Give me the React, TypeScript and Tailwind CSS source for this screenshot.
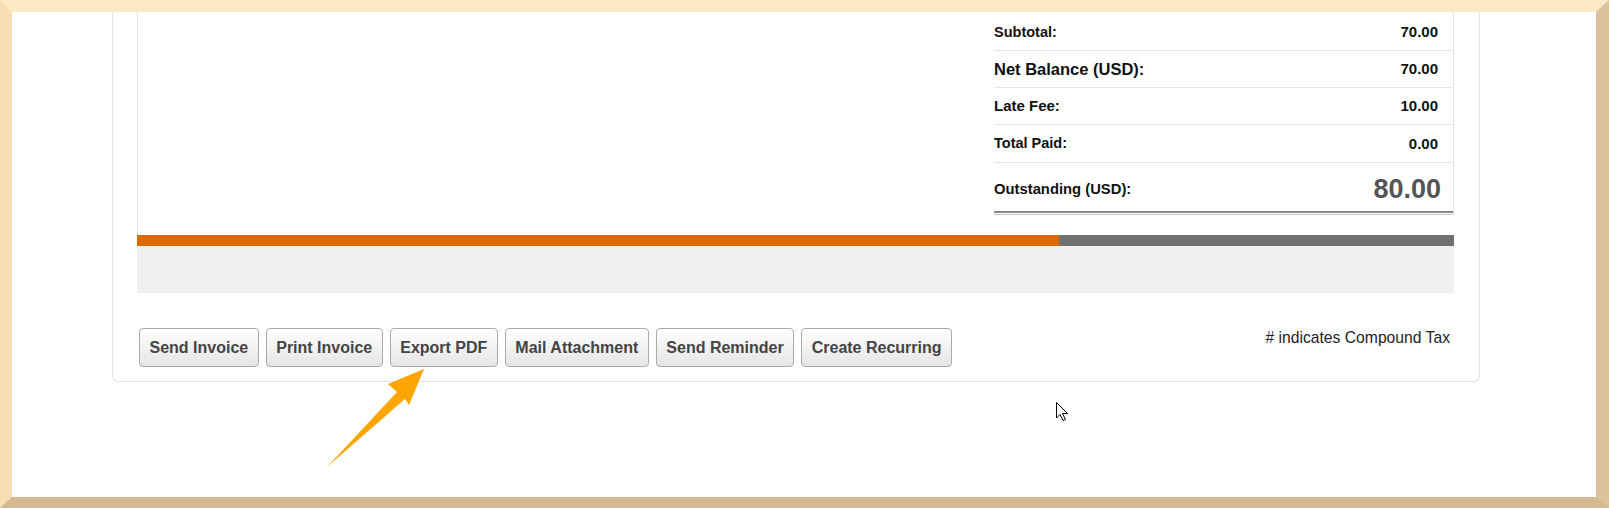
import React from 'react';

const totals = [
    { label: 'Subtotal:', value: '70.00', h: 'h-[39px] pt-[3px]', size: 'text-[14.5px]' },
    { label: 'Net Balance (USD):', value: '70.00', h: 'h-[37px] pt-[1px]', size: 'text-[16.5px]' },
    { label: 'Late Fee:', value: '10.00', h: 'h-[37px] pt-[1px]', size: 'text-[15px]' },
    { label: 'Total Paid:', value: '0.00', h: 'h-[38px] pt-[1px]', size: 'text-[14.5px]' },
];

const actions = ['Send Invoice', 'Print Invoice', 'Export PDF', 'Mail Attachment', 'Send Reminder', 'Create Recurring'];

const App: React.FC = () => {
    return (
        <div
            className="relative w-[1609px] h-[508px] overflow-hidden bg-white border-t-[12px] border-l-[12px] border-r-[13px] border-b-[11px] border-t-[#fde9c6] border-l-[#f7deb4] border-r-[#dcc29c] border-b-[#d4b992]"
            style={{ fontFamily: '"Liberation Sans", Arial, sans-serif' }}
        >
            {/* Invoice card, top is scrolled out of view */}
            <div className="ml-[100px] w-[1368px] border-x border-b border-[#e3e3e3] rounded-b-[6px] pl-[24px] pr-[25px] pb-[14px]">
                <div className="flex">
                    <div className="flex-1 border-l border-[#e3e3e3]" />
                    <div className="w-[460px] border-r border-[#e3e3e3]">
                        {totals.map((row) => (
                            <div
                                key={row.label}
                                className={`${row.h} flex items-center justify-between border-b border-[#e6e6e6] pr-[15px] text-[#111] font-bold`}
                            >
                                <span className={row.size}>{row.label}</span>
                                <span className="text-[15px]">{row.value}</span>
                            </div>
                        ))}
                        <div className="h-[48px] flex items-center justify-between pr-[12px] pt-[5px] font-bold">
                            <span className="text-[14.8px] text-[#111]">Outstanding (USD):</span>
                            <span className="text-[27px] text-[#555]">80.00</span>
                        </div>
                        <div className="h-[2px] bg-[#888]" />
                        <div className="h-[1px] bg-white" />
                        <div className="h-[1px] bg-[#c8c8c8]" />
                    </div>
                </div>
                <div className="h-[20px] border-l border-[#e3e3e3]" />

                {/* Payment progress */}
                <div className="flex h-[11px] bg-[#707070]">
                    <div className="w-[70%] bg-[#dd6a00]" />
                </div>
                <div className="h-[47px] bg-[#f0f0f0]" />

                {/* Actions */}
                <div className="mt-[35px] flex items-start justify-between">
                    <div className="flex gap-[7px] pl-[2px]">
                        {actions.map((label) => (
                            <button
                                key={label}
                                className="h-[39px] px-[9.5px] rounded-[4px] border border-[#aaa] bg-linear-to-b from-white to-[#e5e5e5] text-[16px] font-bold text-[#444]"
                            >
                                {label}
                            </button>
                        ))}
                    </div>
                    <p className="pr-[4px] pt-[1px] text-[15.7px] leading-[18px] text-[#222]"># indicates Compound Tax</p>
                </div>
            </div>

            {/* Annotation arrow */}
            <svg className="absolute left-[303px] top-[345px]" width="120" height="120" viewBox="315 357 120 120">
                <polygon points="424,369 388,384 397,392 327,467 405,399 409,405" fill="#ffa500" />
            </svg>

            {/* Mouse pointer */}
            <svg className="absolute left-[1038px] top-[386px]" width="24" height="26" viewBox="1050 398 24 26">
                <path
                    d="M1056.5 402.5 L1056.5 418 L1060 414.5 L1063 420.5 L1065.5 419.5 L1062.5 413.5 L1067.5 413.5 Z"
                    fill="#fff"
                    stroke="#000"
                    strokeWidth="1"
                    strokeLinejoin="miter"
                />
            </svg>
        </div>
    );
};

export default App;
